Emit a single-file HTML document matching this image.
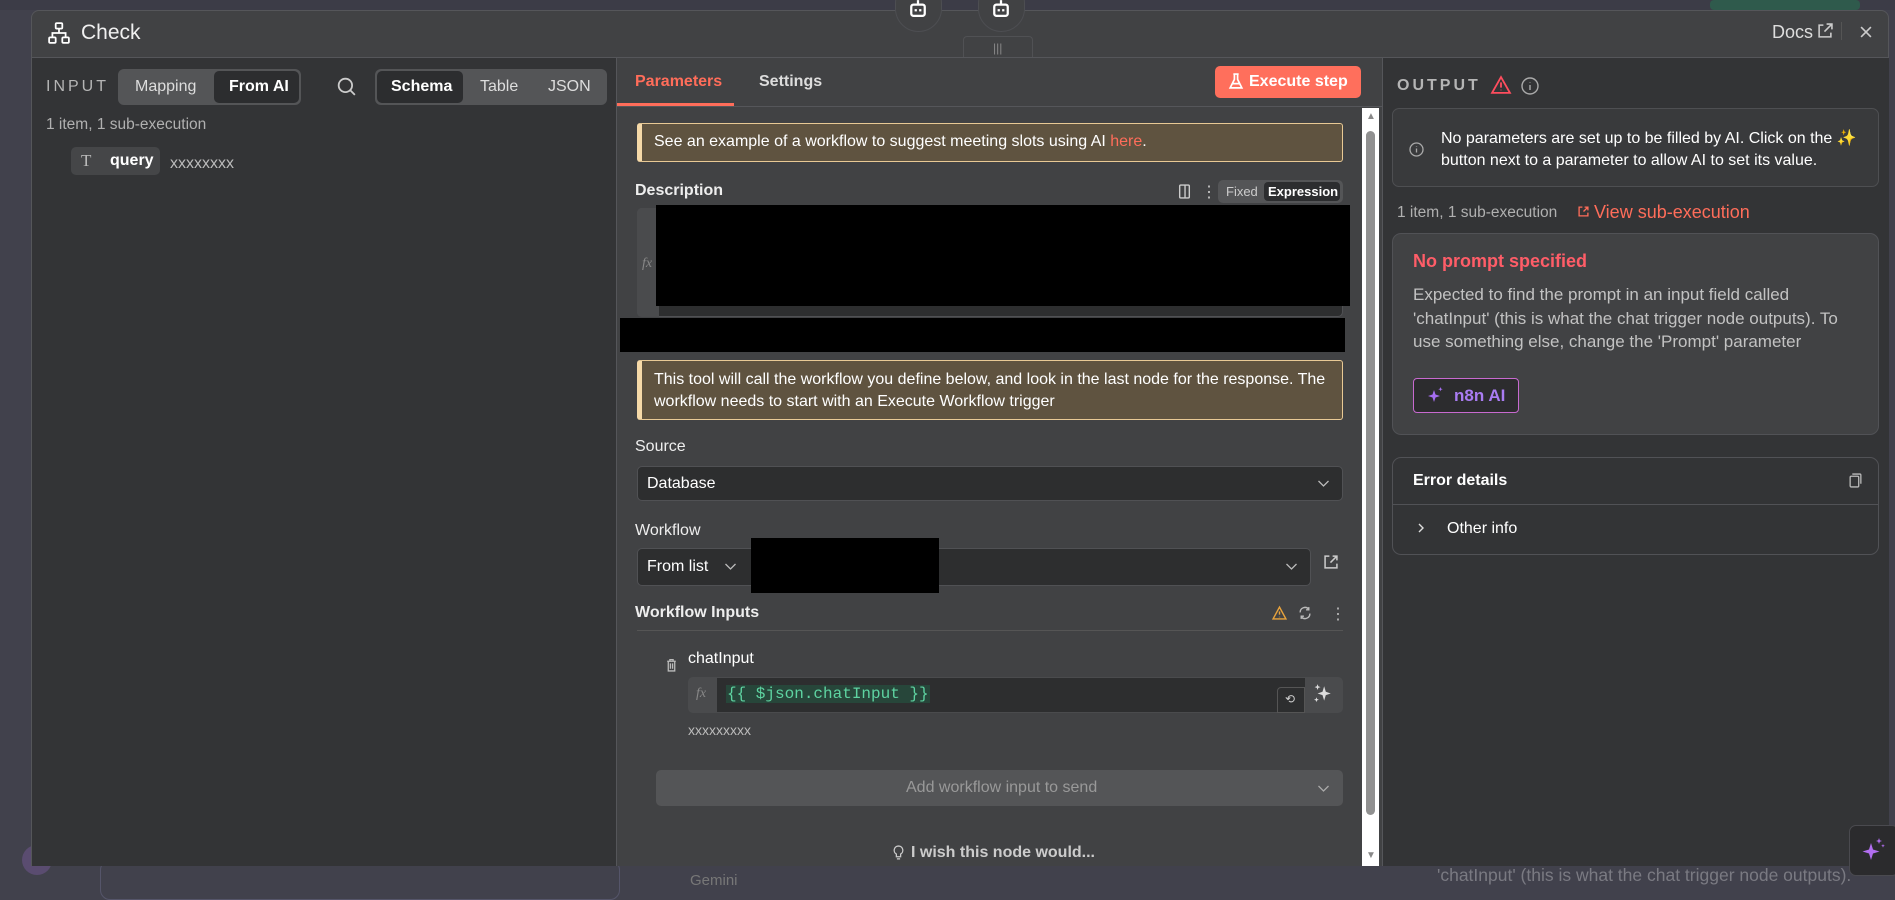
<!DOCTYPE html>
<html><head><meta charset="utf-8"><style>
*{box-sizing:border-box;margin:0;padding:0}
body{width:1895px;height:884px;overflow:hidden;background:#41414c;font-family:"Liberation Sans",sans-serif;position:relative;color:#fff}
.a{position:absolute}
.t{position:absolute;white-space:nowrap}
svg{position:absolute;overflow:visible}
</style></head><body>
<div class="a" style="left:0;top:0;width:1895px;height:10px;background:#3c3c47"></div>
<div class="a" style="left:1710px;top:0;width:150px;height:10px;background:#2f5a4c;border-radius:4px"></div>
<div class="a" style="left:100px;top:860px;width:520px;height:40px;border:1px solid #55556a;border-radius:10px"></div>
<div class="a" style="left:22px;top:845px;width:30px;height:30px;border-radius:50%;background:#5a4c70"></div>
<div class="t" style="left:690px;top:872px;font-size:15px;color:#777">Gemini</div>
<div class="t" style="left:1437px;top:865px;font-size:17.5px;color:#7a7a82">'chatInput' (this is what the chat trigger node outputs).</div>

<div class="a" style="left:31px;top:10px;width:1858px;height:856px;background:#414244;border:1px solid #55565a;border-radius:8px 8px 0 0"></div>
<svg style="left:48px;top:22px" width="22" height="22" viewBox="0 0 20 20" fill="none" stroke="#fff" stroke-width="1.6"><rect x="7" y="1" width="6" height="5" rx="1"/><rect x="1" y="14" width="6" height="5" rx="1"/><rect x="13" y="14" width="6" height="5" rx="1"/><path d="M10 6v4M4 14v-4h12v4"/></svg>
<div class="t" style="left:81px;top:21px;font-size:21px;color:#f0f0f0">Check</div>
<div class="t" style="left:1772px;top:22px;font-size:18px;color:#ddd">Docs</div>
<svg style="left:1817px;top:23px" width="16" height="16" viewBox="0 0 15 15" fill="none" stroke="#ccc" stroke-width="1.5"><path d="M6 2H2v11h11V9M9 1h5v5M14 1L7 8"/></svg>
<div class="a" style="left:1841px;top:22px;width:1px;height:18px;background:#555"></div>
<svg style="left:1860px;top:26px" width="12" height="12" viewBox="0 0 11 11" stroke="#ccc" stroke-width="1.5"><path d="M1 1l9 9M10 1l-9 9"/></svg>
<div class="a" style="left:895px;top:-20px;width:47px;height:52px;border-radius:24px;border:1px solid #4d4e52;background:#414244"></div>
<div class="a" style="left:978px;top:-20px;width:47px;height:52px;border-radius:24px;border:1px solid #4d4e52;background:#414244"></div>
<svg style="left:909px;top:0px" width="18" height="17" viewBox="0 0 16 15" fill="none" stroke="#fff" stroke-width="2"><rect x="2" y="4" width="12" height="10" rx="2"/><path d="M8 0v4M6 8v2M10 8v2"/></svg>
<svg style="left:992px;top:0px" width="18" height="17" viewBox="0 0 16 15" fill="none" stroke="#fff" stroke-width="2"><rect x="2" y="4" width="12" height="10" rx="2"/><path d="M8 0v4M6 8v2M10 8v2"/></svg>
<div class="a" style="left:963px;top:36px;width:70px;height:22px;border:1px solid #505154;border-bottom:none;border-radius:4px 4px 0 0;background:#414244"></div>
<div class="t" style="left:993px;top:41px;font-size:12px;color:#888">|||</div>

<div class="a" style="left:32px;top:57px;width:584px;height:809px;background:#333436;border-top:1px solid #55565a"></div>
<div class="t" style="left:46px;top:78px;font-size:16px;letter-spacing:3px;color:#b5b5b5">INPUT</div>
<div class="a" style="left:118px;top:69px;width:183px;height:36px;background:#545557;border-radius:6px"></div>
<div class="a" style="left:214px;top:71px;width:85px;height:32px;background:#2c2d2f;border-radius:5px"></div>
<div class="t" style="left:135px;top:78px;font-size:16px;color:#ddd">Mapping</div>
<div class="t" style="left:229px;top:78px;font-size:16px;color:#fff;font-weight:bold">From AI</div>
<svg style="left:337px;top:77px" width="19" height="19" viewBox="0 0 17 17" fill="none" stroke="#ccc" stroke-width="1.6"><circle cx="7.5" cy="7.5" r="6"/><path d="M12 12l4 4"/></svg>
<div class="a" style="left:375px;top:69px;width:232px;height:36px;background:#545557;border-radius:6px"></div>
<div class="a" style="left:377px;top:71px;width:86px;height:32px;background:#2c2d2f;border-radius:5px"></div>
<div class="t" style="left:391px;top:78px;font-size:16px;color:#fff;font-weight:bold">Schema</div>
<div class="t" style="left:480px;top:78px;font-size:16px;color:#ddd">Table</div>
<div class="t" style="left:548px;top:78px;font-size:16px;color:#ddd">JSON</div>
<div class="t" style="left:46px;top:116px;font-size:15.5px;color:#b0b0b0">1 item, 1 sub-execution</div>
<div class="a" style="left:71px;top:147px;width:89px;height:28px;background:#454648;border-radius:5px"></div>
<div class="t" style="left:81px;top:151px;font-size:17px;color:#bbb;font-family:'Liberation Serif',serif">T</div>
<div class="t" style="left:110px;top:152px;font-size:16px;color:#fff;font-weight:bold">query</div>
<div class="t" style="left:170px;top:155px;font-size:16px;color:#bbb">xxxxxxxx</div>

<div class="a" style="left:616px;top:57px;width:766px;height:809px;background:#414244;border-left:1px solid #55565a;border-top:1px solid #55565a"></div>
<div class="t" style="left:635px;top:73px;font-size:16px;color:#ff6d5a;font-weight:bold">Parameters</div>
<div class="t" style="left:759px;top:73px;font-size:16px;color:#ddd;font-weight:bold">Settings</div>
<div class="a" style="left:617px;top:106px;width:765px;height:1px;background:#55565a"></div>
<div class="a" style="left:617px;top:103px;width:117px;height:3px;background:#ff6d5a"></div>
<div class="a" style="left:1215px;top:66px;width:146px;height:32px;background:#ff6f5c;border-radius:5px"></div>
<svg style="left:1229px;top:73px" width="14" height="17" viewBox="0 0 13 16" fill="none" stroke="#fff" stroke-width="1.6"><path d="M4 1h5M5 1v5L1 14h11L8 6V1M3 10h7"/></svg>
<div class="t" style="left:1249px;top:73px;font-size:16px;color:#fff;font-weight:bold">Execute step</div>
<div class="a" style="left:1362px;top:108px;width:17px;height:758px;background:#fff"></div>
<div class="a" style="left:1366px;top:131px;width:9px;height:684px;background:#909090;border-radius:5px"></div>
<div class="t" style="left:1366px;top:111px;font-size:10px;color:#888">▲</div>
<div class="t" style="left:1366px;top:850px;font-size:10px;color:#888">▼</div>
<div class="a" style="left:637px;top:123px;width:706px;height:39px;background:#5f5340;border:1px solid #e8c995;border-left:5px solid #f5d9a8;border-radius:3px"></div>
<div class="t" style="left:654px;top:133px;font-size:16px;color:#fff">See an example of a workflow to suggest meeting slots using AI <span style="color:#ff6d5a">here</span>.</div>
<div class="t" style="left:635px;top:182px;font-size:16px;color:#eee;font-weight:bold">Description</div>
<svg style="left:1178px;top:184px" width="13" height="15" viewBox="0 0 11 14" fill="none" stroke="#ccc" stroke-width="1.3"><rect x="1" y="1" width="9" height="12" rx="1"/><path d="M6 1v12"/></svg>
<div class="t" style="left:1201px;top:182px;font-size:16px;color:#ccc">⋮</div>
<div class="a" style="left:1218px;top:180px;width:125px;height:23px;background:#545557;border-radius:5px"></div>
<div class="a" style="left:1264px;top:182px;width:76px;height:19px;background:#2c2d2f;border-radius:4px"></div>
<div class="t" style="left:1226px;top:184px;font-size:13px;color:#ccc">Fixed</div>
<div class="t" style="left:1268px;top:184px;font-size:13px;color:#fff;font-weight:bold">Expression</div>
<div class="a" style="left:637px;top:208px;width:706px;height:109px;background:#2d2e2f;border:1px solid #505154;border-radius:5px"></div>
<div class="a" style="left:637px;top:208px;width:22px;height:109px;background:#4a4b4d;border-radius:5px 0 0 5px"></div>
<div class="t" style="left:642px;top:256px;font-size:14px;color:#888;font-style:italic;font-family:'Liberation Serif',serif">fx</div>
<div class="a" style="left:656px;top:205px;width:694px;height:101px;background:#000"></div>
<div class="a" style="left:620px;top:318px;width:725px;height:34px;background:#000"></div>
<div class="a" style="left:637px;top:360px;width:706px;height:60px;background:#5f5340;border:1px solid #e8c995;border-left:5px solid #f5d9a8;border-radius:3px"></div>
<div class="t" style="left:654px;top:369px;font-size:16px;color:#fff;line-height:22px">This tool will call the workflow you define below, and look in the last node for the response. The<br>workflow needs to start with an Execute Workflow trigger</div>
<div class="t" style="left:635px;top:438px;font-size:16px;color:#eee">Source</div>
<div class="a" style="left:637px;top:466px;width:706px;height:35px;background:#2d2e2f;border:1px solid #505154;border-radius:5px"></div>
<div class="t" style="left:647px;top:475px;font-size:16px;color:#fff">Database</div>
<svg style="left:1317px;top:480px" width="13" height="7" viewBox="0 0 12 7" fill="none" stroke="#bbb" stroke-width="1.3"><path d="M1 1l5 5 5-5"/></svg>
<div class="t" style="left:635px;top:522px;font-size:16px;color:#eee">Workflow</div>
<div class="a" style="left:637px;top:548px;width:674px;height:38px;background:#2d2e2f;border:1px solid #505154;border-radius:5px"></div>
<div class="t" style="left:647px;top:558px;font-size:16px;color:#fff">From list</div>
<svg style="left:724px;top:563px" width="13" height="7" viewBox="0 0 12 7" fill="none" stroke="#bbb" stroke-width="1.3"><path d="M1 1l5 5 5-5"/></svg>
<svg style="left:1285px;top:563px" width="13" height="7" viewBox="0 0 12 7" fill="none" stroke="#bbb" stroke-width="1.3"><path d="M1 1l5 5 5-5"/></svg>
<div class="a" style="left:751px;top:538px;width:188px;height:55px;background:#000"></div>
<svg style="left:1324px;top:555px" width="14" height="14" viewBox="0 0 13 13" fill="none" stroke="#ccc" stroke-width="1.4"><path d="M5 1H1v11h11V8M8 1h4v4M12 1L6 7"/></svg>
<div class="t" style="left:635px;top:604px;font-size:16px;color:#eee;font-weight:bold">Workflow Inputs</div>
<svg style="left:1272px;top:606px" width="15" height="14" viewBox="0 0 14 13" fill="none" stroke="#e8a33d" stroke-width="1.3"><path d="M7 1L1 12h12z M7 5v3M7 10v.5"/></svg>
<svg style="left:1298px;top:606px" width="14" height="14" viewBox="0 0 13 13" fill="none" stroke="#bbb" stroke-width="1.3"><path d="M2 6a4.5 4.5 0 0 1 8-3M11 7a4.5 4.5 0 0 1-8 3M10 1v2.5H7.5M3 12V9.5h2.5"/></svg>
<div class="t" style="left:1330px;top:604px;font-size:16px;color:#bbb">⋮</div>
<div class="a" style="left:637px;top:630px;width:706px;height:1px;background:#555"></div>
<svg style="left:666px;top:658px" width="11" height="14" viewBox="0 0 10 13" fill="none" stroke="#bbb" stroke-width="1.2"><path d="M1 3h8M3.5 3V1.5h3V3M2 3v9h6V3M4 5v5M6 5v5"/></svg>
<div class="t" style="left:688px;top:650px;font-size:16px;color:#fff">chatInput</div>
<div class="a" style="left:688px;top:677px;width:655px;height:36px;background:#4a4b4d;border-radius:5px"></div>
<div class="a" style="left:717px;top:678px;width:588px;height:34px;background:#2d2e2f"></div>
<div class="t" style="left:696px;top:686px;font-size:14px;color:#888;font-style:italic;font-family:'Liberation Serif',serif">fx</div>
<div class="t" style="left:726px;top:685px;font-size:16px;color:#5ed3a1;background:#27463a;font-family:'Liberation Mono',monospace;padding:0 1px">{{ $json.chatInput }}</div>
<div class="a" style="left:1277px;top:687px;width:28px;height:26px;border:1px solid #555;border-radius:4px 0 0 0;background:#2d2e2f"></div>
<div class="t" style="left:1285px;top:692px;font-size:12px;color:#ccc">⟲</div>
<svg style="left:1313px;top:683px" width="19" height="22" viewBox="0 0 17 20" fill="#ddd"><path d="M10 3l1.5 5 4.5 1.5-4.5 1.5L10 16 8.5 11 4 9.5 8.5 8z"/><path d="M4 1l.7 2 2 .7-2 .7L4 6.4 3.3 4.4l-2-.7 2-.7z"/><path d="M3 13l.6 1.6 1.6.6-1.6.6L3 17.4l-.6-1.6-1.6-.6 1.6-.6z"/></svg>
<div class="t" style="left:688px;top:722px;font-size:14px;color:#bbb">xxxxxxxxx</div>
<div class="a" style="left:656px;top:770px;width:687px;height:36px;background:#545557;border-radius:5px"></div>
<div class="t" style="left:906px;top:779px;font-size:16px;color:#999">Add workflow input to send</div>
<svg style="left:1317px;top:785px" width="13" height="7" viewBox="0 0 12 7" fill="none" stroke="#aaa" stroke-width="1.3"><path d="M1 1l5 5 5-5"/></svg>
<svg style="left:893px;top:845px" width="11" height="16" viewBox="0 0 10 15" fill="none" stroke="#ccc" stroke-width="1.2"><path d="M5 1a4 4 0 0 0-2 7.5V11h4V8.5A4 4 0 0 0 5 1zM3.5 13h3"/></svg>
<div class="t" style="left:911px;top:844px;font-size:16px;color:#ccc;font-weight:bold">I wish this node would...</div>

<div class="a" style="left:1382px;top:57px;width:507px;height:809px;background:#333436;border-left:1px solid #55565a;border-top:1px solid #55565a"></div>
<div class="t" style="left:1397px;top:77px;font-size:16px;letter-spacing:3px;color:#b5b5b5;font-weight:bold">OUTPUT</div>
<svg style="left:1491px;top:76px" width="20" height="18" viewBox="0 0 19 17" fill="none" stroke="#ff4d5e" stroke-width="1.7"><path d="M9.5 1L1 16h17z M9.5 6v5M9.5 13v.5"/></svg>
<svg style="left:1521px;top:77px" width="18" height="18" viewBox="0 0 18 18" fill="none" stroke="#aaa" stroke-width="1.4"><circle cx="9" cy="9" r="8"/><path d="M9 8v5M9 5v.5"/></svg>
<div class="a" style="left:1392px;top:108px;width:487px;height:79px;background:#393a3c;border:1px solid #4e4f52;border-radius:7px"></div>
<svg style="left:1409px;top:142px" width="15" height="15" viewBox="0 0 15 15" fill="none" stroke="#aaa" stroke-width="1.3"><circle cx="7.5" cy="7.5" r="6.5"/><path d="M7.5 6.5v4M7.5 4v.5"/></svg>
<div class="t" style="left:1441px;top:128px;font-size:16px;color:#fff;line-height:22px">No parameters are set up to be filled by AI. Click on the <span style="color:#f7c85a">✨</span><br>button next to a parameter to allow AI to set its value.</div>
<div class="t" style="left:1397px;top:204px;font-size:15.5px;color:#b0b0b0">1 item, 1 sub-execution</div>
<svg style="left:1578px;top:206px" width="11" height="11" viewBox="0 0 10 10" fill="none" stroke="#ff6d5a" stroke-width="1.2"><path d="M4 1H1v8h8V6M6 1h3v3M9 1L5 5"/></svg>
<div class="t" style="left:1594px;top:202px;font-size:18px;color:#ff6d5a">View sub-execution</div>
<div class="a" style="left:1392px;top:233px;width:487px;height:202px;background:#414244;border:1px solid #515256;border-radius:9px"></div>
<div class="t" style="left:1413px;top:251px;font-size:18px;color:#ff5d68;font-weight:bold">No prompt specified</div>
<div class="t" style="left:1413px;top:283px;font-size:17px;color:#c2c2c2;line-height:23.5px">Expected to find the prompt in an input field called<br>'chatInput' (this is what the chat trigger node outputs). To<br>use something else, change the 'Prompt' parameter</div>
<div class="a" style="left:1413px;top:378px;width:106px;height:35px;background:#2c2c2e;border:1px solid #c86ad0;border-radius:4px"></div>
<svg style="left:1428px;top:387px" width="16" height="16" viewBox="0 0 16 16" fill="#a56ef0"><path d="M6 3l1.5 4.5L12 9l-4.5 1.5L6 15l-1.5-4.5L0 9l4.5-1.5z"/><path d="M12.5 0l.6 1.6 1.6.6-1.6.6-.6 1.6-.6-1.6-1.6-.6 1.6-.6z"/></svg>
<div class="t" style="left:1454px;top:386px;font-size:17px;color:#a97cf2;font-weight:bold">n8n AI</div>
<div class="a" style="left:1392px;top:457px;width:487px;height:98px;background:#333436;border:1px solid #515256;border-radius:9px"></div>
<div class="a" style="left:1393px;top:504px;width:485px;height:1px;background:#515256"></div>
<div class="t" style="left:1413px;top:472px;font-size:16px;color:#fff;font-weight:bold">Error details</div>
<svg style="left:1849px;top:473px" width="13" height="15" viewBox="0 0 12 14" fill="none" stroke="#bbb" stroke-width="1.2"><rect x="1" y="3" width="8" height="10" rx="1"/><path d="M3 1h7a1 1 0 0 1 1 1v8"/></svg>
<svg style="left:1418px;top:523px" width="6" height="10" viewBox="0 0 6 10" fill="none" stroke="#ddd" stroke-width="1.4"><path d="M1 1l4 4-4 4"/></svg>
<div class="t" style="left:1447px;top:520px;font-size:16px;color:#fff">Other info</div>

<div class="a" style="left:1849px;top:825px;width:50px;height:51px;background:#2b2b2d;border:1px solid #4a4a4f;border-radius:7px"></div>
<svg style="left:1862px;top:838px" width="24" height="24" viewBox="0 0 24 24" fill="#b26ef0"><path d="M9 5l2 6.5 6.5 2-6.5 2L9 22l-2-6.5-6.5-2 6.5-2z"/><path d="M17 0l.8 2.2 2.2.8-2.2.8L17 6l-.8-2.2L14 3l2.2-.8z"/><path d="M21 6l.5 1.3 1.3.5-1.3.5L21 9.6l-.5-1.3-1.3-.5 1.3-.5z"/></svg>
</body></html>
